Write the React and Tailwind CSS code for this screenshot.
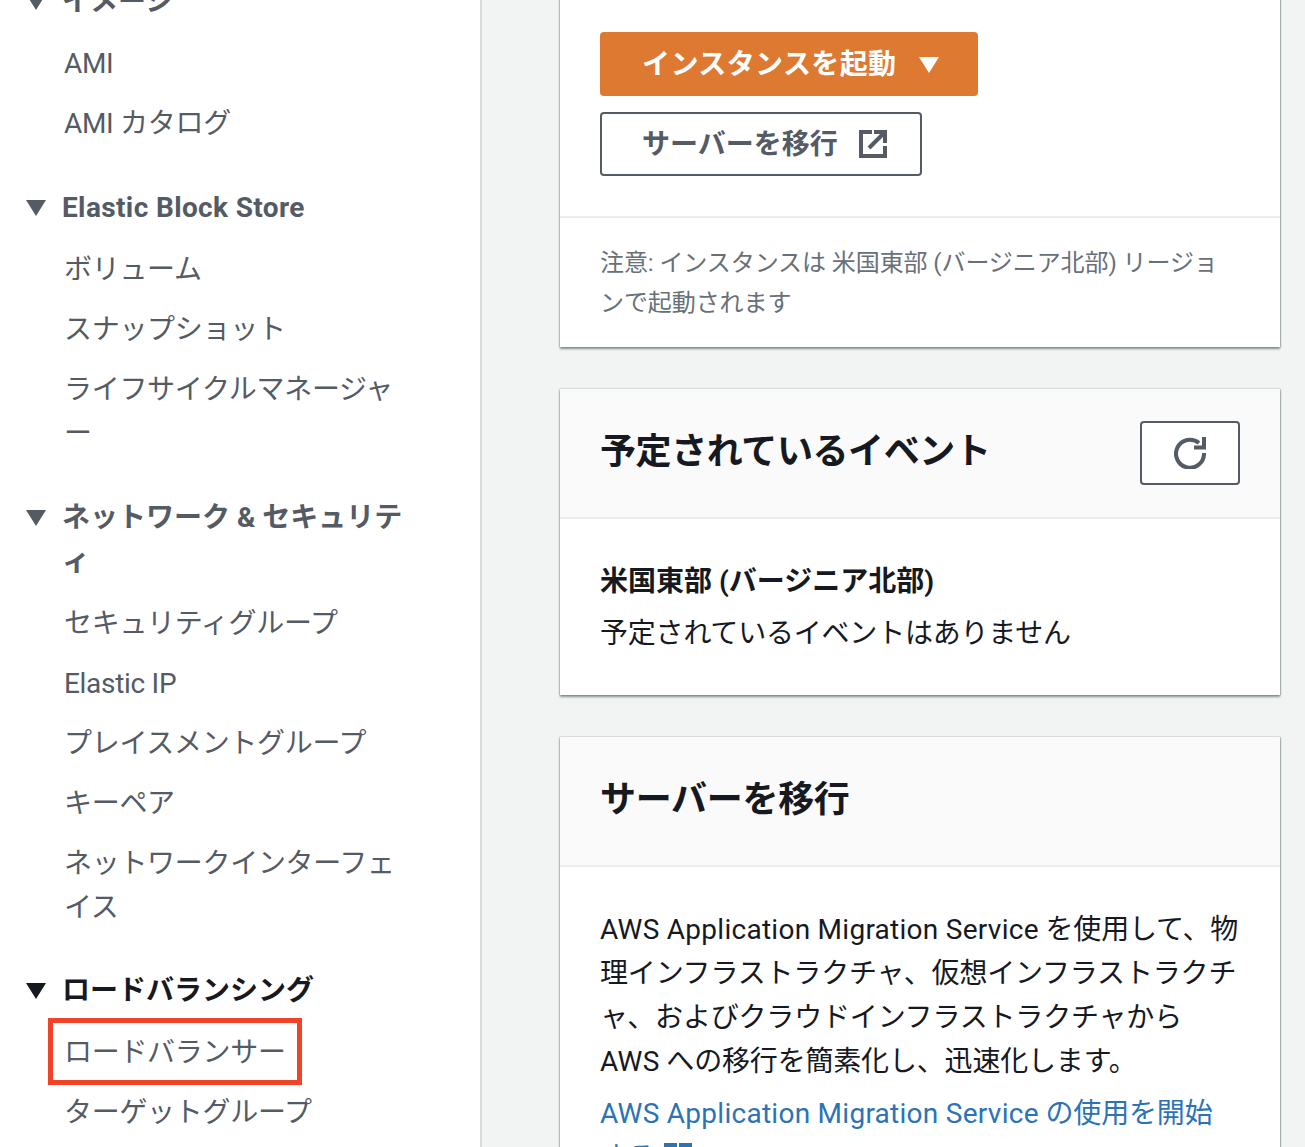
function Tri({ className }) {
  return (
    <svg viewBox="0 0 20 16" className={className} fill="currentColor">
      <path d="M0 0h20L10 16z" />
    </svg>
  );
}

function Item({ children, mark }) {
  return (
    <li className="relative py-2 pl-16 pr-16 text-[28px] leading-[44px] tracking-[-0.3px] text-[#545b64]">
      {mark && <span className="absolute left-12 top-[-5px] h-[67px] w-[254px] border-[5px] border-[#f04328]" />}
      {children}
    </li>
  );
}

function Section({ title, dark, children, className = "" }) {
  return (
    <div className={className}>
      <div className={`flex pl-[26px] pr-[64px] font-bold text-[28px] leading-[44px] mb-[10px] ${dark ? "text-[#16191f]" : "text-[#545b64]"}`}>
        <Tri className="mt-[14px] h-4 w-5 shrink-0" />
        <span className="ml-4 min-w-0">{title}</span>
      </div>
      <ul>{children}</ul>
    </div>
  );
}

function Sidebar() {
  return (
    <aside className="w-[482px] shrink-0 overflow-hidden bg-white border-r-2 border-[#d5dbdb]">
      <div className="-mt-5">
        <Section title="イメージ">
          <Item>AMI</Item>
          <Item>AMI カタログ</Item>
        </Section>
        <Section title={<span className="tracking-[0.37px]">Elastic Block Store</span>} className="mt-8">
          <Item>ボリューム</Item>
          <Item>スナップショット</Item>
          <Item>ライフサイクルマネージャー</Item>
        </Section>
        <Section title="ネットワーク & セキュリティ" className="mt-8">
          <Item>セキュリティグループ</Item>
          <Item>Elastic IP</Item>
          <Item>プレイスメントグループ</Item>
          <Item>キーペア</Item>
          <Item>ネットワークインターフェイス</Item>
        </Section>
        <Section title="ロードバランシング" dark className="mt-[31px]">
          <Item mark>ロードバランサー</Item>
          <Item>ターゲットグループ</Item>
        </Section>
      </div>
    </aside>
  );
}

function Card({ className = "", children }) {
  return <section className={`bg-white shadow-[0_2px_2px_rgba(0,28,36,0.45),0_-1px_1px_rgba(0,28,36,0.06),1px_0_1px_rgba(0,28,36,0.18),-1px_0_1px_rgba(0,28,36,0.12)] ${className}`}>{children}</section>;
}

function ExternalIcon({ className }) {
  return (
    <svg viewBox="0 0 28 28" className={className} fill="none" stroke="currentColor" strokeWidth="4">
      <path d="M13 2H2v24h24V16" />
      <path d="M10 18 25 3" />
      <path d="M15 2h11v11" />
    </svg>
  );
}

function RefreshIcon({ className }) {
  return (
    <svg viewBox="0 0 32 32" className={className} fill="none" stroke="currentColor" strokeWidth="4">
      <path d="M25 6A14 14 0 1 0 30 16" />
      <path d="M20 10.500h10V0" />
    </svg>
  );
}

function Latin({ children }) {
  return <span className="tracking-[0.27px]">{children}</span>;
}

export default function App() {
  return (
    <div className="flex h-[1147px] overflow-hidden bg-[#f2f3f3] font-[Roboto,'Noto_Sans_CJK_JP',sans-serif] text-[#16191f]">
      <Sidebar />
      <main className="min-w-0 flex-1 pl-[78px] pr-[25px]">
        <Card className="-mt-2">
          <div className="flex flex-col items-start gap-4 p-10">
            <button className="flex h-16 items-center rounded bg-[#de7932] pl-[42px] pr-[39px] pt-0.5 text-[28px] font-bold tracking-[0.4px] text-white">
              インスタンスを起動
              <Tri className="ml-[23px] h-4 w-5" />
            </button>
            <button className="flex h-16 items-center rounded border-2 border-[#545b64] bg-white pl-10 pr-[33px] text-[28px] font-bold text-[#545b64]">
              <span className="pt-0.5">サーバーを移行</span>
              <ExternalIcon className="ml-[21px] h-7 w-7" />
            </button>
          </div>
          <div className="border-t-2 border-[#eaeded] pl-10 pr-[60px] pt-[25px] pb-6 text-[24px] leading-10 tracking-[-0.08px] text-[#687078]">
            注意: インスタンスは 米国東部 (バージニア北部) リージョンで起動されます
          </div>
        </Card>

        <Card className="mt-[42px]">
          <div className="flex items-start justify-between border-b-2 border-[#eaeded] bg-[#fafafa] px-10 py-8">
            <h2 className="text-[36px] font-bold leading-[62px] tracking-[-0.4px]">予定されているイベント</h2>
            <button className="flex h-16 w-[100px] items-center justify-center rounded border-2 border-[#545b64] bg-white text-[#545b64]">
              <RefreshIcon className="h-8 w-8" />
            </button>
          </div>
          <div className="px-10 pt-[41px] pb-[39px] text-[28px] leading-[44px]">
            <p className="font-bold">米国東部 (バージニア北部)</p>
            <p className="mt-2 tracking-[-0.2px]">予定されているイベントはありません</p>
          </div>
        </Card>

        <Card className="mt-[42px]">
          <div className="border-b-2 border-[#eaeded] bg-[#fafafa] px-10 pt-8 pb-[34px]">
            <h2 className="text-[36px] font-bold leading-[62px] tracking-[-0.3px]">サーバーを移行</h2>
          </div>
          <div className="px-10 pt-[41px] pb-[39px] text-[28px] leading-[44px] tracking-[-0.18px]">
            <p><Latin>AWS Application Migration Service</Latin> を使用して、物理インフラストラクチャ、仮想インフラストラクチャ、およびクラウドインフラストラクチャから <Latin>AWS</Latin> への移行を簡素化し、迅速化します。</p>
            <p className="mt-2 text-[#2c73b6]">
              <Latin>AWS Application Migration Service</Latin> の使用を開始<br />する
              <ExternalIcon className="ml-2 inline h-7 w-7 align-[-4px]" />
            </p>
          </div>
        </Card>
      </main>
    </div>
  );
}
